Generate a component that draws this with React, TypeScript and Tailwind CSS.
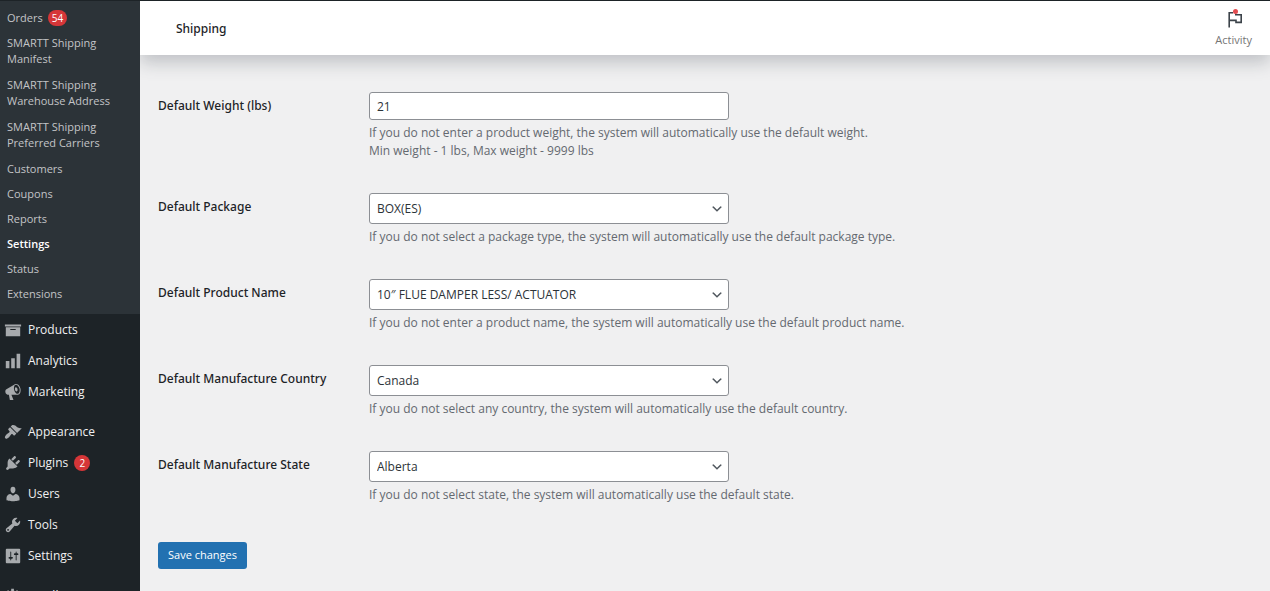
import type { ReactNode } from "react";

type SubItem = { label: string; badge?: number; current?: boolean; tall?: boolean };

const subItems: SubItem[] = [
  { label: "Orders", badge: 54 },
  { label: "SMARTT Shipping Manifest", tall: true },
  { label: "SMARTT Shipping Warehouse Address", tall: true },
  { label: "SMARTT Shipping Preferred Carriers", tall: true },
  { label: "Customers" },
  { label: "Coupons" },
  { label: "Reports" },
  { label: "Settings", current: true },
  { label: "Status" },
  { label: "Extensions" },
];

const icons = {
  archive: "M19 4v2H1V4h18zM2 7h16v10H2V7zm11 3V9H7v1h6z",
  bars: "M18 18V2h-4v16h4zm-6 0V7H8v11h4zm-6 0v-8H2v8h4z",
  megaphone:
    "M18.15 5.94c.46 1.62.38 3.22-.02 4.48-.42 1.28-1.26 2.18-2.3 2.48-.16.06-.26.06-.4.06-.06.02-.12.02-.18.02-.06.02-.14.02-.22.02h-6.8l2.22 5.5c.02.14-.06.26-.14.34-.08.1-.24.16-.34.16H6.95c-.1 0-.26-.06-.34-.16-.08-.08-.16-.2-.14-.34l-1-5.5H4.25l-.02-.02c-.5.06-1.08-.18-1.54-.62s-.88-1.08-1.06-1.88c-.24-.8-.2-1.56-.02-2.2.18-.62.58-1.08 1.06-1.3l.02-.02 9-5.4c.1-.06.18-.1.24-.16.06-.04.14-.08.24-.12.16-.08.28-.12.5-.18 1.04-.3 2.24.1 3.22.98s1.84 2.24 2.26 3.86zm-2.58 5.98h-.02c.4-.1.74-.34 1.04-.7.58-.7.86-1.76.86-3.04 0-.64-.1-1.3-.28-1.98-.34-1.36-1.02-2.5-1.78-3.24s-1.68-1.1-2.46-.88c-.82.22-1.4.96-1.7 2-.32 1.04-.28 2.36.06 3.72.38 1.36 1 2.5 1.8 3.24.78.74 1.62 1.1 2.48.88zm-2.54-7.08c.22-.04.42-.02.62.04.38.16.76.48 1.02 1s.42 1.2.42 1.78c0 .3-.04.56-.12.8-.18.48-.44.84-.86.94-.34.1-.8-.06-1.14-.4s-.64-.86-.78-1.5c-.18-.62-.12-1.24.02-1.72s.48-.84.82-.94z",
  brush:
    "M14.48 11.06L7.41 3.99l1.5-1.5c.5-.56 2.3-.47 3.51.32 1.21.8 1.43 1.28 2.91 2.1 1.18.64 2.45 1.26 4.45.85zm-.71.71L6.7 4.7 4.93 6.47c-.39.39-.39 1.02 0 1.41l1.06 1.06c.39.39.39 1.03 0 1.42-.6.6-1.43 1.11-2.21 1.69-.35.26-.7.53-1.01.84C1.43 14.23.4 16.08 1.4 17.07c.99 1 2.84-.03 4.18-1.36.31-.31.58-.66.85-1.02.57-.78 1.08-1.61 1.69-2.21.39-.39 1.02-.39 1.41 0l1.06 1.06c.39.39 1.02.39 1.41 0z",
  plug: "M13.11 4.36L9.87 7.6 8 5.73l3.24-3.24c.35-.34 1.05-.2 1.56.32.52.51.66 1.21.31 1.55zm-8 1.77l.91-1.12 9.01 9.01-1.19.84c-.71.71-2.63 1.16-3.82 1.16H6.14L4.9 17.26c-.59.59-1.54.59-2.12 0-.59-.58-.59-1.53 0-2.12l1.24-1.24v-3.88c0-1.13.4-3.19 1.09-3.89zm7.26 3.97l3.24-3.24c.34-.35 1.04-.21 1.55.31.52.51.66 1.21.31 1.55l-3.24 3.25z",
  user: "M10 9.25c-2.27 0-2.73-3.44-2.73-3.44C7 4.02 7.82 2 9.97 2c2.16 0 2.98 2.02 2.71 3.81 0 0-.41 3.44-2.68 3.44zm0 2.57L12.72 10c2.39 0 4.52 2.33 4.52 4.53v2.49s-3.65 1.13-7.24 1.13c-3.65 0-7.24-1.13-7.24-1.13v-2.49c0-2.25 1.94-4.48 4.47-4.48z",
  wrench:
    "M16.68 9.77c-1.34 1.34-3.3 1.67-4.95.99l-5.41 6.52c-.99.99-2.59.99-3.58 0s-.99-2.59 0-3.57l6.52-5.42c-.68-1.65-.35-3.61.99-4.95 1.28-1.28 3.12-1.62 4.72-1.06l-2.89 2.89 2.82 2.82 2.86-2.87c.53 1.58.18 3.39-1.08 4.65zM3.81 16.21c.4.39 1.04.39 1.43 0 .4-.4.4-1.04 0-1.43-.39-.4-1.03-.4-1.43 0-.39.39-.39 1.03 0 1.43z",
  sliders:
    "M18 17V3c0-.6-.4-1-1-1H3c-.6 0-1 .4-1 1v14c0 .6.4 1 1 1h14c.6 0 1-.4 1-1zM8 11h1c.55 0 1 .45 1 1s-.45 1-1 1H8v1.5c0 .28-.22.5-.5.5s-.5-.22-.5-.5V13H6c-.55 0-1-.45-1-1s.45-1 1-1h1V5.5c0-.28.22-.5.5-.5s.5.22.5.5V11zm5-2h-1c-.55 0-1-.45-1-1s.45-1 1-1h1V5.5c0-.28.22-.5.5-.5s.5.22.5.5V7h1c.55 0 1 .45 1 1s-.45 1-1 1h-1v5.5c0 .28-.22.5-.5.5s-.5-.22-.5-.5V9z",
  gear: "M18 12h-2.18c-.17.7-.44 1.35-.81 1.93l1.54 1.54-2.1 2.1-1.54-1.54c-.58.36-1.23.63-1.91.79V19H8v-2.18c-.68-.16-1.33-.43-1.91-.79l-1.54 1.54-2.12-2.12 1.54-1.54c-.36-.58-.63-1.23-.79-1.91H1V9.03h2.17c.16-.7.44-1.35.8-1.94L2.43 5.55l2.1-2.1 1.54 1.54c.58-.37 1.24-.64 1.93-.81V2h3v2.18c.68.16 1.33.43 1.91.79l1.54-1.54 2.12 2.12-1.54 1.54c.36.59.64 1.24.8 1.94H18V12z",
};

type MenuItem = { label: string; icon: keyof typeof icons; badge?: number };

const menuGroups: MenuItem[][] = [
  [
    { label: "Products", icon: "archive" },
    { label: "Analytics", icon: "bars" },
    { label: "Marketing", icon: "megaphone" },
  ],
  [
    { label: "Appearance", icon: "brush" },
    { label: "Plugins", icon: "plug", badge: 2 },
    { label: "Users", icon: "user" },
    { label: "Tools", icon: "wrench" },
    { label: "Settings", icon: "sliders" },
  ],
  [{ label: "Small", icon: "gear" }],
];

function Badge({ children }: { children: ReactNode }) {
  return (
    <span className="inline-flex h-4 min-w-4 items-center justify-center rounded-full bg-[#d63638] px-1 text-[10px] leading-4 font-medium text-white">
      {children}
    </span>
  );
}

function Sidebar() {
  return (
    <nav aria-label="Admin menu" className="z-10 w-[140px] shrink-0 bg-[#1d2327]">
      <ul className="bg-[#2c3338] pt-1 pb-2">
        {subItems.map((item) => (
          <li key={item.label}>
            <a
              href="#"
              className={`flex items-center gap-[5px] pt-[5px] pr-5 pl-[7px] text-[11px] leading-4 ${
                item.tall ? "pb-[5px]" : "pb-1"
              } ${item.current ? "font-semibold text-white" : "text-[#c3c4c7]"}`}
            >
              {item.label}
              {item.badge && <Badge>{item.badge}</Badge>}
            </a>
          </li>
        ))}
      </ul>
      {menuGroups.map((group, i) => (
        <ul key={i} className="mb-[9px]">
          {group.map((item) => (
            <li key={item.label}>
              <a href="#" className="flex h-[31px] items-center gap-[6px] pl-1 text-[12px] text-[#f0f0f1]">
                <svg viewBox="0 0 20 20" className="size-[18px] shrink-0 fill-[#a7aaad]" aria-hidden="true">
                  <path d={icons[item.icon]} />
                </svg>
                {item.label}
                {item.badge && <Badge>{item.badge}</Badge>}
              </a>
            </li>
          ))}
        </ul>
      ))}
    </nav>
  );
}

type Field = { id: string; label: string; value: string; help: string[]; select?: boolean };

const fields: Field[] = [
  {
    id: "weight",
    label: "Default Weight (lbs)",
    value: "21",
    help: [
      "If you do not enter a product weight, the system will automatically use the default weight.",
      "Min weight - 1 lbs, Max weight - 9999 lbs",
    ],
  },
  {
    id: "package",
    label: "Default Package",
    value: "BOX(ES)",
    help: ["If you do not select a package type, the system will automatically use the default package type."],
    select: true,
  },
  {
    id: "product",
    label: "Default Product Name",
    value: "10″ FLUE DAMPER LESS/ ACTUATOR",
    help: ["If you do not enter a product name, the system will automatically use the default product name."],
    select: true,
  },
  {
    id: "country",
    label: "Default Manufacture Country",
    value: "Canada",
    help: ["If you do not select any country, the system will automatically use the default country."],
    select: true,
  },
  {
    id: "state",
    label: "Default Manufacture State",
    value: "Alberta",
    help: ["If you do not select state, the system will automatically use the default state."],
    select: true,
  },
];

const controlClass =
  "block w-full rounded-[3px] border border-[#8c8f94] bg-white px-[7px] text-[12px] text-[#2c3338]";

function FieldRow({ field }: { field: Field }) {
  return (
    <div className="flex">
      <label
        htmlFor={field.id}
        className="w-[211px] shrink-0 pt-[5px] font-['Noto_Sans','Open_Sans',sans-serif] text-[12px] leading-[18px] font-medium text-[#1d2327]"
      >
        {field.label}
      </label>
      <div className="flex-1">
        <div className="relative max-w-[360px]">
          {field.select ? (
            <>
              <select id={field.id} className={`${controlClass} h-[31px] appearance-none pr-6`}>
                <option>{field.value}</option>
              </select>
              <svg
                viewBox="0 0 20 20"
                className="pointer-events-none absolute top-2 right-[5px] size-[14px] translate-y-px fill-[#50575e]"
                aria-hidden="true"
              >
                <path d="M5 6l5 5 5-5 2 1-7 7-7-7 2-1z" />
              </svg>
            </>
          ) : (
            <input id={field.id} type="text" defaultValue={field.value} className={`${controlClass} h-7`} />
          )}
        </div>
        <div className="pt-1 text-[12px] leading-[18px] text-[#646970]">
          {field.help.map((line) => (
            <p key={line}>{line}</p>
          ))}
        </div>
      </div>
    </div>
  );
}

export default function App() {
  return (
    <div className="flex h-screen overflow-hidden border-t border-[#1d2327] bg-[#f0f0f1] font-['Open_Sans','Noto_Sans',sans-serif]">
      <Sidebar />
      <div className="flex min-w-0 flex-1 flex-col">
        <header className="flex h-[54px] shrink-0 items-center justify-between bg-white pr-[18px] pl-9 shadow-[0_8px_16px_0_rgba(85,93,102,0.3)]">
          <h1 className="pt-px font-['Noto_Sans','Open_Sans',sans-serif] text-[12px] font-medium text-[#1d2327]">
            Shipping
          </h1>
          <button
            type="button"
            className="flex flex-col items-center gap-1 pb-1 text-[11px] leading-4 text-[#757575]"
          >
            <svg viewBox="0 0 24 24" className="size-6" fill="none" aria-hidden="true">
              <path d="M7.2 23.5V8.8H11M13 10.8h6.2v7.6H14v-2H7.2" stroke="#3c434a" strokeWidth="1.6" />
              <circle cx="13.5" cy="7.5" r="2.5" fill="#e34b4f" />
            </svg>
            Activity
          </button>
        </header>
        <main className="px-[18px] pt-[37px]">
          <form className="flex flex-col gap-[33px]">
            {fields.map((field) => (
              <FieldRow key={field.id} field={field} />
            ))}
            <button
              type="button"
              className="mt-[5px] h-[27px] self-start rounded-[3px] bg-[#2271b1] px-[10px] text-[11px] font-medium text-white"
            >
              Save changes
            </button>
          </form>
        </main>
      </div>
    </div>
  );
}
